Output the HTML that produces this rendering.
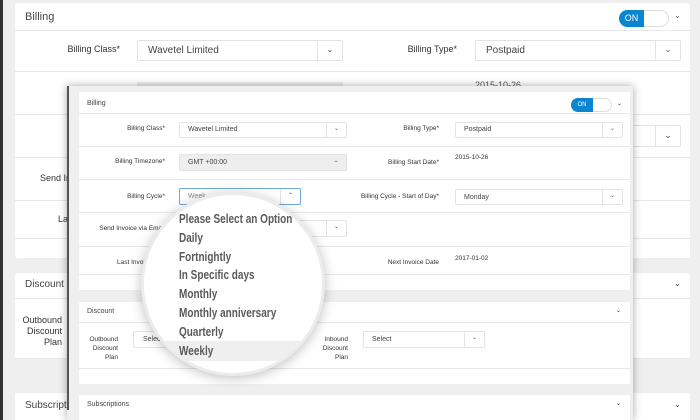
<!DOCTYPE html>
<html><head><meta charset="utf-8"><style>
*{margin:0;padding:0;box-sizing:border-box}
body{width:700px;height:420px;overflow:hidden;background:#efefef;font-family:"Liberation Sans",sans-serif;position:relative;color:#333}
.a{position:absolute}
.w{background:#fff}
.hr{position:absolute;height:1px;background:#e8e8e8}
.lbl{position:absolute;text-align:right;color:#333}
.sel{position:absolute;background:#fff;border:1px solid #e3e3e3;border-radius:2px;color:#444}
.sel .c{position:absolute;right:0;top:0;bottom:0;border-left:1px solid #e3e3e3;text-align:center;color:#555}
.sel span{position:absolute}
</style></head><body>
<div class="a" style="left:0;top:0;width:3px;height:420px;background:#333"></div>
<div class="a w" style="left:15px;top:3px;width:675px;height:255px;border-radius:3px"></div>
<div class="a" style="left:25px;top:11px;font-size:11px;color:#444">Billing</div>
<div class="a" style="left:619px;top:10px;width:50px;height:17px;border:1px solid #ddd;border-radius:9px;background:#fff"></div>
<div class="a" style="left:619px;top:10px;width:25px;height:17px;background:#0a86d0;border-radius:9px 0 0 9px;color:#fff;font-size:9px;line-height:17px;text-align:center">ON</div>
<div class="a" style="left:674px;top:11px;font-size:8px;color:#555">⌄</div>
<div class="hr" style="left:15px;top:30px;width:675px"></div>
<div class="lbl" style="left:40px;top:44px;width:80px;font-size:9px">Billing Class*</div>
<div class="sel" style="left:137px;top:40px;width:206px;height:21px;font-size:10px"><span style="left:10px;top:4px">Wavetel Limited</span><div class="c" style="width:25px;font-size:8px;line-height:18px">⌄</div></div>
<div class="lbl" style="left:380px;top:44px;width:77px;font-size:9px">Billing Type*</div>
<div class="sel" style="left:475px;top:40px;width:206px;height:21px;font-size:10px"><span style="left:10px;top:4px">Postpaid</span><div class="c" style="width:25px;font-size:8px;line-height:18px">⌄</div></div>
<div class="hr" style="left:15px;top:71px;width:675px"></div>
<div class="a" style="left:137px;top:82px;width:206px;height:10px;background:#eee"></div>
<div class="a" style="left:475px;top:80px;font-size:9px;color:#555">2015-10-26</div>
<div class="hr" style="left:15px;top:114px;width:675px"></div>
<div class="sel" style="left:600px;top:125px;width:81px;height:22px"><div class="c" style="width:25px;font-size:9px;line-height:18px">⌄</div></div>
<div class="hr" style="left:15px;top:157px;width:675px"></div>
<div class="a" style="left:40px;top:173px;font-size:9px">Send In</div>
<div class="hr" style="left:15px;top:200px;width:675px"></div>
<div class="a" style="left:58px;top:214px;font-size:9px">La</div>
<div class="hr" style="left:15px;top:238px;width:675px"></div>
<div class="a w" style="left:15px;top:273px;width:675px;height:86px;border-radius:3px"></div>
<div class="a" style="left:25px;top:279px;font-size:10px;color:#444">Discount</div>
<div class="a" style="left:674px;top:279px;font-size:8px">⌄</div>
<div class="hr" style="left:15px;top:298px;width:675px"></div>
<div class="lbl" style="left:20px;top:315px;width:42px;font-size:9px;line-height:11px">Outbound Discount Plan</div>
<div class="hr" style="left:15px;top:358px;width:675px"></div>
<div class="a w" style="left:15px;top:393px;width:675px;height:27px"></div>
<div class="a" style="left:25px;top:400px;font-size:10px;color:#444">Subscriptions</div>
<div class="a" style="left:674px;top:400px;font-size:8px">⌄</div>

<div class="a" style="left:67px;top:86px;width:566px;height:334px;background:#efefef;box-shadow:0 0 8px rgba(0,0,0,.35)"></div>
<div class="a" style="left:67px;top:86px;width:2px;height:324px;background:#555"></div>
<div class="a w" style="left:79px;top:92px;width:551px;height:198px;border-radius:2px"></div>
<div class="a" style="left:87px;top:100px;font-size:7px;color:#444">Billing</div>
<div class="a" style="left:571px;top:98px;width:41px;height:14px;border:1px solid #ddd;border-radius:7px;background:#fff"></div>
<div class="a" style="left:571px;top:98px;width:22px;height:14px;background:#0a86d0;border-radius:7px 0 0 7px;color:#fff;font-size:6px;line-height:14px;text-align:center">ON</div>
<div class="a" style="left:617px;top:100px;font-size:6px">⌄</div>
<div class="hr" style="left:79px;top:113px;width:551px"></div>
<div class="lbl" style="left:90px;top:125px;width:75px;font-size:6.5px">Billing Class*</div>
<div class="sel" style="left:179px;top:122px;width:168px;height:16px;font-size:7px"><span style="left:8px;top:3px">Wavetel Limited</span><div class="c" style="width:20px;font-size:6px;line-height:13px">⌄</div></div>
<div class="lbl" style="left:360px;top:125px;width:79px;font-size:6.5px">Billing Type*</div>
<div class="sel" style="left:455px;top:122px;width:168px;height:16px;font-size:7px"><span style="left:8px;top:3px">Postpaid</span><div class="c" style="width:20px;font-size:6px;line-height:13px">⌄</div></div>
<div class="hr" style="left:79px;top:146px;width:551px"></div>
<div class="lbl" style="left:90px;top:158px;width:75px;font-size:6.5px">Billing Timezone*</div>
<div class="sel" style="left:179px;top:154px;width:168px;height:17px;font-size:7px;background:#eee"><span style="left:8px;top:4px">GMT +00:00</span><div class="c" style="width:20px;font-size:6px;line-height:13px;border:0">⌄</div></div>
<div class="lbl" style="left:340px;top:159px;width:99px;font-size:6.5px">Billing Start Date*</div>
<div class="a" style="left:455px;top:154px;font-size:6.5px">2015-10-26</div>
<div class="hr" style="left:79px;top:179px;width:551px"></div>
<div class="lbl" style="left:90px;top:193px;width:75px;font-size:6.5px">Billing Cycle*</div>
<div class="sel" style="left:179px;top:188px;width:122px;height:17px;font-size:7px;border-color:#6fa8dc"><span style="left:8px;top:4px;color:#888">Week</span><div class="c" style="width:20px;font-size:6px;line-height:15px">⌃</div></div>
<div class="lbl" style="left:340px;top:193px;width:99px;font-size:6.5px">Billing Cycle - Start of Day*</div>
<div class="sel" style="left:455px;top:189px;width:168px;height:16px;font-size:7px"><span style="left:8px;top:4px">Monday</span><div class="c" style="width:20px;font-size:6px;line-height:13px">⌄</div></div>
<div class="hr" style="left:79px;top:212px;width:551px"></div>
<div class="lbl" style="left:80px;top:225px;width:85px;font-size:6.5px">Send Invoice via Email</div>
<div class="sel" style="left:179px;top:220px;width:168px;height:17px"><div class="c" style="width:20px;font-size:6px;line-height:13px">⌄</div></div>
<div class="hr" style="left:79px;top:246px;width:551px"></div>
<div class="a" style="left:117px;top:259px;font-size:6.5px">Last Invoice</div>
<div class="lbl" style="left:340px;top:259px;width:99px;font-size:6.5px">Next Invoice Date</div>
<div class="a" style="left:455px;top:255px;font-size:6.5px">2017-01-02</div>
<div class="hr" style="left:79px;top:274px;width:551px"></div>
<div class="a w" style="left:79px;top:302px;width:551px;height:82px;border-radius:2px"></div>
<div class="a" style="left:87px;top:308px;font-size:7px;color:#444">Discount</div>
<div class="a" style="left:616px;top:307px;font-size:6px">⌄</div>
<div class="hr" style="left:79px;top:322px;width:551px"></div>
<div class="lbl" style="left:80px;top:335px;width:38px;font-size:6.5px;line-height:9px">Outbound Discount Plan</div>
<div class="sel" style="left:133px;top:331px;width:120px;height:17px;font-size:7px"><span style="left:9px;top:4px">Select</span></div>
<div class="lbl" style="left:316px;top:335px;width:32px;font-size:6.5px;line-height:9px">Inbound Discount Plan</div>
<div class="sel" style="left:363px;top:331px;width:122px;height:17px;font-size:7px"><span style="left:8px;top:4px">Select</span><div class="c" style="width:20px;font-size:6px;line-height:13px">⌄</div></div>
<div class="hr" style="left:79px;top:368px;width:551px"></div>
<div class="a w" style="left:79px;top:395px;width:551px;height:25px"></div>
<div class="a" style="left:87px;top:401px;font-size:7px;color:#444">Subscriptions</div>
<div class="a" style="left:616px;top:400px;font-size:6px">⌄</div>

<div class="a" style="left:144px;top:195px;width:178px;height:178px;border-radius:50%;background:#fff;box-shadow:0 0 0 3px #ececec,0 2px 12px 3px rgba(0,0,0,.25);overflow:hidden">
 <div class="a" style="left:0;top:146px;width:178px;height:20px;background:#efefef"></div>
 <div class="a" style="left:35px;top:15px;font-size:12.5px;font-weight:bold;color:#5a5a5a;line-height:18.8px;transform:scaleX(0.8);transform-origin:0 0;white-space:nowrap">Please Select an Option<br>Daily<br>Fortnightly<br>In Specific days<br>Monthly<br>Monthly anniversary<br>Quarterly<br>Weekly</div>
</div>
</body></html>
